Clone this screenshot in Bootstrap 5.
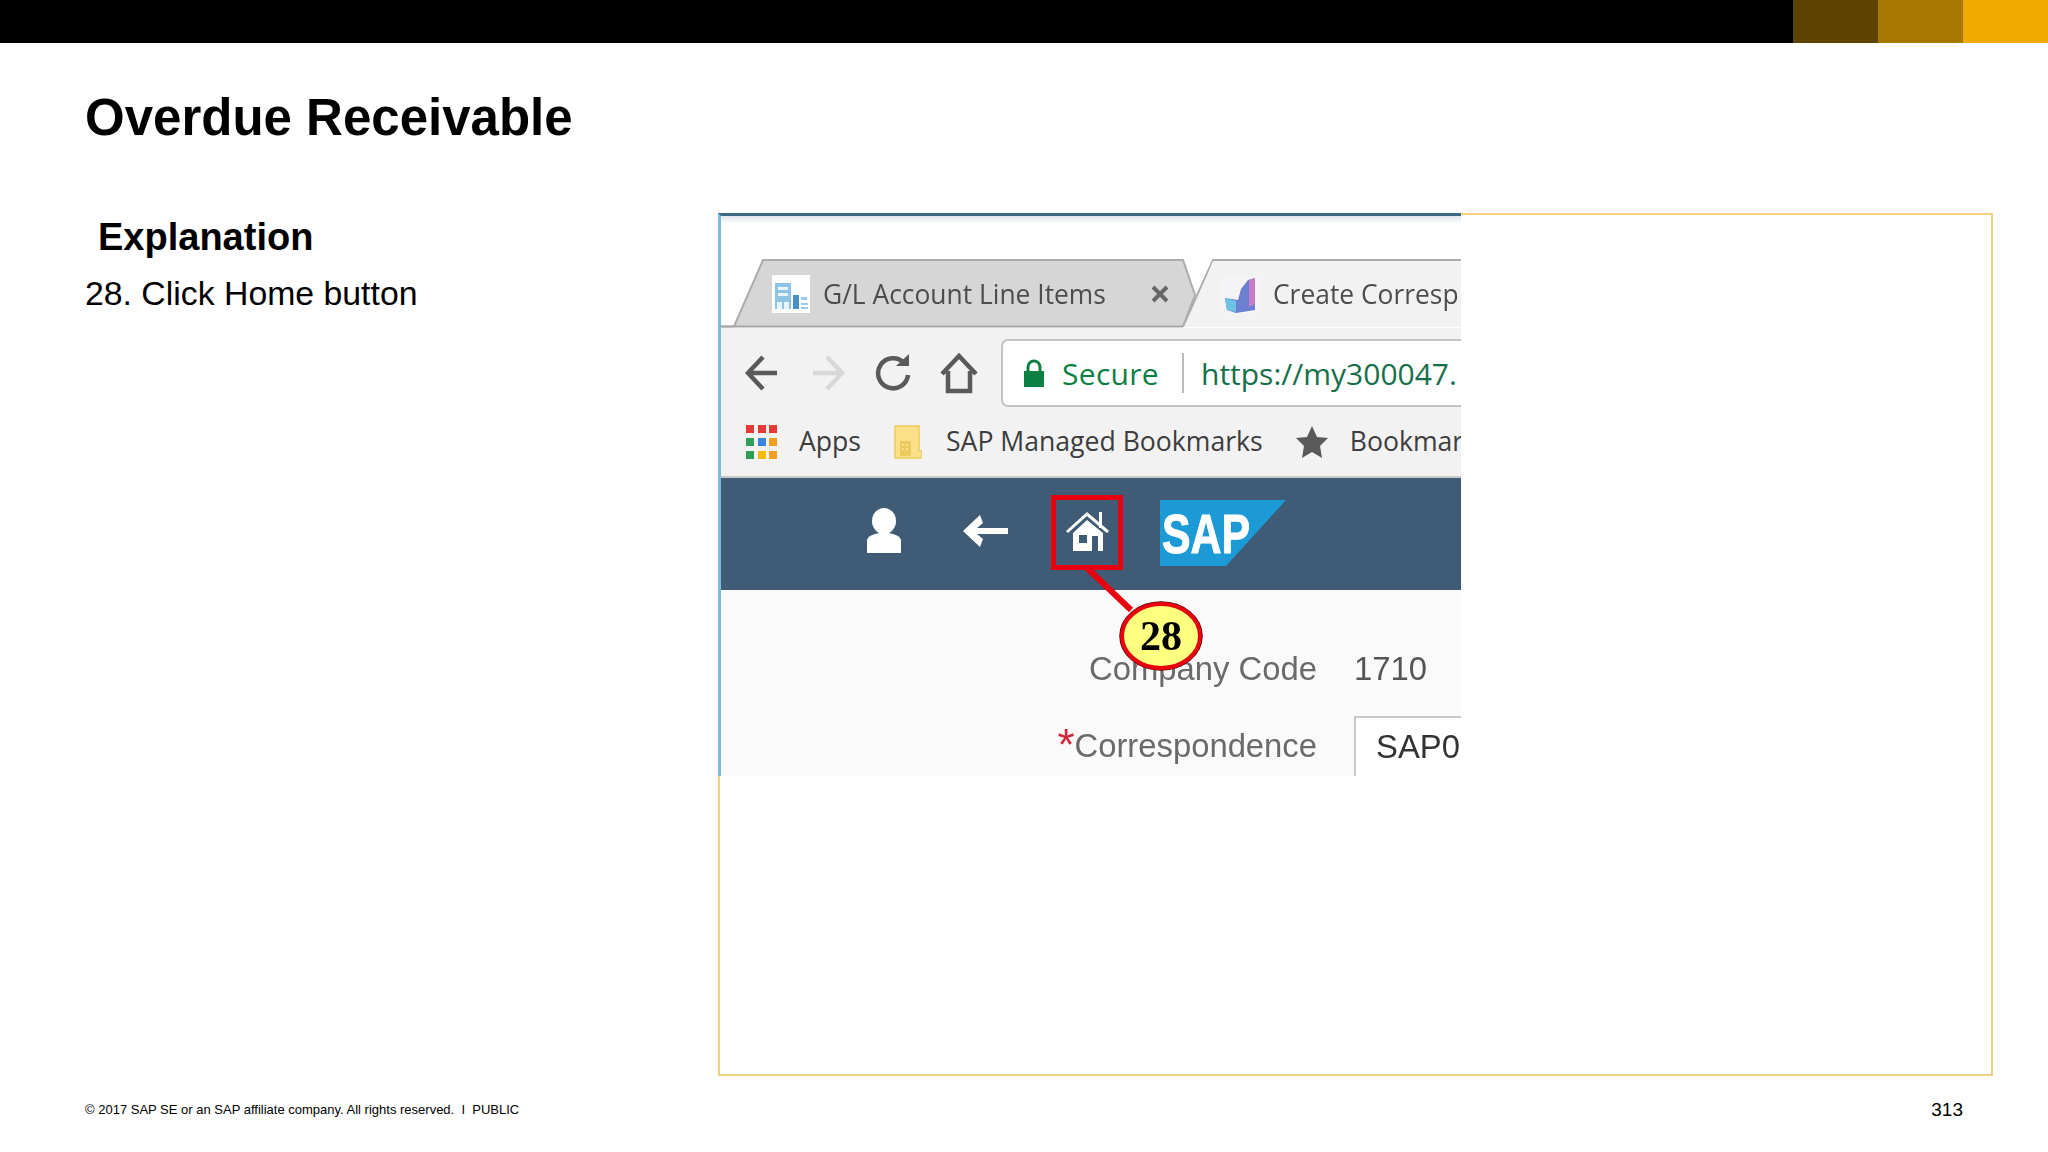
<!DOCTYPE html>
<html lang="en">
<head>
<meta charset="utf-8">
<title>Overdue Receivable</title>
<link href="https://cdn.jsdelivr.net/npm/bootstrap@5.3.0/dist/css/bootstrap.min.css" rel="stylesheet">
<style>
html,body{margin:0;background:#fff;}
body{width:2048px;height:1152px;overflow:hidden;font-family:"Liberation Sans",Arial,sans-serif;color:#000;}
.topstrip{height:43px;background:#000;}
.seg{width:85px;height:100%;}
.seg-a{background:#5c4400;}
.seg-b{background:#a87900;}
.seg-c{background:#f0ab00;}
.slide-title{font-size:51px;line-height:60px;font-weight:700;margin:45px 0 65px 85px;}
.left-col{width:718px;padding-left:85px;flex:none;}
.expl{font-size:38px;line-height:44px;font-weight:700;margin:2px 0 12px 13px;}
.step{font-size:33.8px;line-height:44px;}
.frame{width:1275px;height:863px;border:2px solid #f1d27c;flex:none;}
.shot{width:743px;height:563px;margin:-2px 0 0 -2px;border-left:3px solid #7db9dc;border-top:3px solid #3d6a82;overflow:hidden;position:relative;background:#fff;}
.blurred{filter:blur(.7px);height:100%;}
.tabspace{height:43px;background:linear-gradient(#dfe6ea,#fff 8px);}
.tabstrip{height:69px;position:relative;padding:2px 0 0 51px;font-family:"Open Sans","Noto Sans",sans-serif;font-size:26.4px;white-space:nowrap;color:#4d4d4d;}
.tabshape{position:absolute;left:0;top:0;}
.tabstrip>*:not(.tabshape){position:relative;}
.tabone{width:450px;padding-right:52px;flex:none;}
.tabtext{margin-left:13px;}
.toolbar{height:79px;background:#f2f2f2;padding:11px 0 0 22px;gap:27.5px;}
.toolbar svg{flex:none;}
.urlbox{margin-left:-4px;width:600px;height:68px;flex:none;background:#fff;border:2px solid #c4c4c4;border-right:0;border-radius:7px 0 0 7px;padding-left:20px;font-family:"Open Sans","Noto Sans",sans-serif;font-size:30px;white-space:nowrap;color:#0b8043;}
.urlsep{width:2px;height:40px;background:#bdbdbd;margin:0 17px 0 23px;flex:none;}
.urltext{color:#15704a;}
.securetext{margin-left:17px;letter-spacing:.3px;}
.bookmarks{height:71px;background:#f2f2f2;border-bottom:2px solid #c8c8c8;padding-left:25px;font-family:"Open Sans","Noto Sans",sans-serif;font-size:26.6px;white-space:nowrap;color:#3d3d3d;overflow:hidden;}
.bookmarks>*{flex:none;}
.bm-a{margin-left:22px;}
.bm-b{margin-left:33px;}
.bm-c{margin-left:24px;}
.bm-d{margin-left:32px;}
.bm-e{margin-left:21px;}
.shellbar{height:112px;background:#3f5b75;padding:0 0 6px 145px;}
.shellbar>*{flex:none;}
.gap-a{margin-left:61px;}
.gap-b{margin-left:58px;}
.gap-c{margin-left:51px;margin-top:4px;}
.formarea{height:186px;background:#fafafa;padding-top:60px;font-size:32.8px;color:#6a6a6a;white-space:nowrap;}
.lab{width:596px;flex:none;text-align:right;margin-right:37px;line-height:38px;}
.val{line-height:38px;color:#555;}
.req{color:#d0283a;font-size:44px;line-height:30px;vertical-align:-3px;}
.valbox{width:120px;flex:none;height:60px;line-height:50px;background:#fff;border:2px solid #c8c8c8;border-right:0;border-bottom:0;padding:4px 0 0 20px;color:#333;overflow:hidden;}
.row-a{height:38px;margin-bottom:28px;}
.row-b{height:60px;}
.overlay{position:absolute;left:0;top:0;}
.foot{padding:21px 85px 0 85px;font-size:13px;line-height:26px;}
.pagenum{font-size:19px;}
</style>
</head>
<body>
<div class="topstrip d-flex justify-content-end">
  <div class="seg seg-a"></div><div class="seg seg-b"></div><div class="seg seg-c"></div>
</div>
<h1 class="slide-title">Overdue Receivable</h1>
<div class="d-flex">
  <div class="left-col">
    <div class="expl">Explanation</div>
    <div class="step">28. Click Home button</div>
  </div>
  <div class="frame">
    <div class="shot">
      <div class="blurred">
        <div class="tabspace"></div>
        <div class="tabstrip d-flex align-items-center">
          <svg class="tabshape" width="742" height="69" viewBox="0 0 742 69">
            <path d="M0 67.5H13L42 1H462L474 36L462 67.5" fill="#d6d6d6" stroke="#acacac" stroke-width="2"/>
            <path d="M462 67.5L492 1H742V67.5" fill="#f2f2f2" stroke="#acacac" stroke-width="2"/>
            <path d="M464 68L492 2H742V68Z" fill="#f2f2f2"/>
            <path d="M0 67.5H462" stroke="#a8a8a8" stroke-width="2"/>
          </svg>
          <div class="tabone d-flex align-items-center">
            <svg width="38" height="38" viewBox="0 0 38 38"><rect width="38" height="38" fill="#fff"/><path d="M3 8h16v26H3z" fill="#8fc3e6"/><path d="M6 12h10v3H6zM6 18h10v3H6zM5 27h5v7H5zM12 27h5v7h-5z" fill="#eaf4fb"/><path d="M21 20h6v14h-6z" fill="#4a90c4"/><path d="M29 22h6v3h-6zM29 28h7v2h-7zM29 32h7v2h-7z" fill="#9cc9e6"/></svg>
            <span class="tabtext">G/L Account Line Items</span>
            <svg class="ms-auto" width="20" height="20" viewBox="0 0 20 20"><path d="M3 3L17 17M17 3L3 17" stroke="#666" stroke-width="4"/></svg>
          </div>
          <svg width="38" height="38" viewBox="0 0 38 38"><path d="M0 0H38V38H0Z" fill="#f4f3f6"/><path d="M3 22L16 24L19 13L26 4L33 2V34L14 37L5 34Z" fill="#6d7fd0"/><path d="M27 4L33 2V28L27 31Z" fill="#c77cc8"/><path d="M3 22L14 25V36L5 34Z" fill="#6cc3e6"/></svg>
          <span class="tabtext">Create Corresp</span>
        </div>
        <div class="toolbar d-flex align-items-center">
          <svg width="38" height="38" viewBox="0 0 38 38"><path d="M34 19H7M20 3L5 19L20 35" fill="none" stroke="#5a5a5a" stroke-width="4.5"/></svg>
          <svg width="38" height="38" viewBox="0 0 38 38"><path d="M4 19H31M18 3L33 19L18 35" fill="none" stroke="#d8d8d8" stroke-width="4.5"/></svg>
          <svg width="38" height="38" viewBox="0 0 38 38"><path d="M30 9A15 15 0 1 0 34 21" fill="none" stroke="#5a5a5a" stroke-width="4.5"/><path d="M22 12H35V0Z" fill="#5a5a5a"/></svg>
          <svg width="38" height="41" viewBox="0 0 38 41"><path d="M2 21L19 3L36 21M8 18V38H30V18" fill="none" stroke="#5a5a5a" stroke-width="4.5"/></svg>
          <div class="urlbox d-flex align-items-center">
            <svg width="22" height="28" viewBox="0 0 22 28"><path d="M1 12H21V28H1Z" fill="#0b8043"/><path d="M5 13V8A6 6 0 0 1 17 8V13" fill="none" stroke="#0b8043" stroke-width="3"/></svg>
            <span class="securetext">Secure</span>
            <div class="urlsep"></div>
            <span class="urltext">https://my300047.</span>
          </div>
        </div>
        <div class="bookmarks d-flex align-items-center">
          <svg width="31" height="34" viewBox="0 0 31 34">
            <rect x="0" y="0" width="8" height="8" fill="#e53935"/><rect x="12" y="0" width="8" height="8" fill="#e53935"/><rect x="23" y="0" width="8" height="8" fill="#e53935"/>
            <rect x="0" y="13" width="8" height="8" fill="#2e9e58"/><rect x="12" y="13" width="8" height="8" fill="#3b82e0"/><rect x="23" y="13" width="8" height="8" fill="#f0a020"/>
            <rect x="0" y="26" width="8" height="8" fill="#2e9e58"/><rect x="12" y="26" width="8" height="8" fill="#fbb908"/><rect x="23" y="26" width="8" height="8" fill="#f0a020"/>
          </svg>
          <span class="bm-a">Apps</span>
          <svg class="bm-b" width="28" height="34" viewBox="0 0 28 34"><path d="M1 1H25V26H28V33H1Z" fill="#fbe08a" stroke="#eccb5c" stroke-width="1.5"/><path d="M6 16H17V31H6Z" fill="#eccb5c"/><path d="M8 19h2v2H8zM12 19h2v2h-2zM8 23h2v2H8zM12 23h2v2h-2z" fill="#fbe08a"/></svg>
          <span class="bm-c">SAP Managed Bookmarks</span>
          <svg class="bm-d" width="34" height="34" viewBox="0 0 34 34"><path d="M17 1L22 12L33 13L25 21L27 33L17 27L7 33L9 21L1 13L12 12Z" fill="#5a5a5a"/></svg>
          <span class="bm-e">Bookmar</span>
        </div>
        <div class="shellbar d-flex align-items-center">
          <svg width="36" height="46" viewBox="0 0 36 46"><ellipse cx="18" cy="13" rx="12" ry="13" fill="#fff"/><path d="M1 45V33C1 28 8 26 13 25H23C28 26 35 28 35 33V45Z" fill="#fff"/></svg>
          <svg class="gap-a" width="45" height="32" viewBox="0 0 45 32"><path d="M17 0L0 16L17 32L20 24L14 19H45V13H14L20 8Z" fill="#fff"/></svg>
          <svg class="gap-b" width="43" height="40" viewBox="0 0 43 40"><path d="M1 21L21 3L42 21" fill="none" stroke="#fff" stroke-width="3"/><path d="M33 1h3v16h-3z" fill="#fff"/><path d="M7 22L21 9L37 22V40H7Z" fill="#fff"/><rect x="13" y="24" width="8" height="8" fill="#3f5b75"/><rect x="26" y="25" width="6" height="15" fill="#3f5b75"/></svg>
          <svg class="gap-c" width="126" height="66" viewBox="0 0 126 66"><path d="M0 0H126L66 66H0Z" fill="#1b9ad6"/><text x="2" y="53" font-family="Liberation Sans" font-weight="700" font-size="56" fill="#fff" stroke="#fff" stroke-width="1" textLength="88" lengthAdjust="spacingAndGlyphs">SAP</text></svg>
        </div>
        <div class="formarea">
          <div class="row-a d-flex">
            <div class="lab">Company Code</div>
            <div class="val">1710</div>
          </div>
          <div class="row-b d-flex align-items-center">
            <div class="lab"><span class="req">*</span>Correspondence</div>
            <div class="valbox">SAP0</div>
          </div>
        </div>
      </div>
      <svg class="overlay" width="739" height="560" viewBox="0 0 739 560">
        <path d="M366 352L410 394" stroke="#e8000f" stroke-width="6"/>
        <rect x="332.5" y="281.5" width="67" height="70" fill="none" stroke="#e8000f" stroke-width="5"/>
        <ellipse cx="440" cy="420" rx="41" ry="34" fill="none" stroke="#5a0008" stroke-width="1.5"/>
        <ellipse cx="440" cy="420" rx="39" ry="32" fill="#ffff80" stroke="#e8000f" stroke-width="4"/>
        <text x="440" y="434" text-anchor="middle" font-family="Liberation Serif" font-weight="700" font-size="42" fill="#000">28</text>
      </svg>
    </div>
  </div>
</div>
<div class="foot d-flex justify-content-between align-items-center">
  <span>© 2017 SAP SE or an SAP affiliate company. All rights reserved.&nbsp; I &nbsp;PUBLIC</span>
  <span class="pagenum">313</span>
</div>
<script src="https://cdn.jsdelivr.net/npm/bootstrap@5.3.0/dist/js/bootstrap.bundle.min.js"></script>
</body>
</html>
